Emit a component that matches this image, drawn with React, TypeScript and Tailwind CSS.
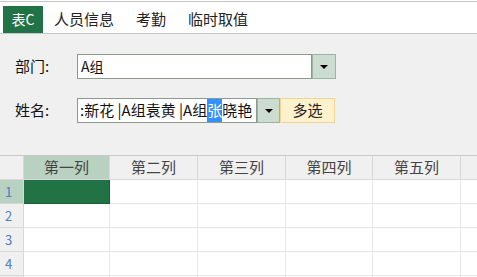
const font = "font-['Microsoft_YaHei','Noto_Sans_CJK_SC',sans-serif]";

const cols = ["第一列", "第二列", "第三列", "第四列", "第五列", ""];
const rows = [1, 2, 3, 4, 5];

function Tabs() {
  return (
    <div className="h-[33px] border-t border-b border-[#c6c6c6] mt-px bg-white flex items-end pl-[3px]">
      <div className="h-[27px] w-10 bg-[#217346] text-white flex items-center justify-center text-[14px]">
        表C
      </div>
      {["人员信息", "考勤", "临时取值"].map((t) => (
        <div key={t} className="h-[27px] px-[11px] flex items-center text-[15px] text-[#222]">
          {t}
        </div>
      ))}
    </div>
  );
}

function DropBtn({ w }: { w: string }) {
  return (
    <div className={`${w} h-full bg-[#cddcd1] border border-[#9fb3a5] flex items-center justify-center`}>
      <div className="w-0 h-0 border-l-[4px] border-r-[4px] border-t-[4px] border-l-transparent border-r-transparent border-t-black" />
    </div>
  );
}

function Form() {
  return (
    <div className="h-[122px] bg-[#f0f0f0] border-b border-[#c8c8c8] pt-5 pl-[15px] flex flex-col gap-[19px]">
      <div className="flex items-center h-[25px]">
        <div className="w-[62px] text-[15px] text-[#111]">部门:</div>
        <div className="flex h-full">
          <div className="w-[235px] h-full bg-white border border-[#8a9a8e] flex items-center pl-[3px] text-[14px] text-[#111]">
            A组
          </div>
          <DropBtn w="w-[24px]" />
        </div>
      </div>
      <div className="flex items-center h-[25px]">
        <div className="w-[62px] text-[15px] text-[#111]">姓名:</div>
        <div className="flex h-full">
          <div className="w-[180px] h-full bg-white border border-[#8a9a8e] flex items-center pl-[2px] text-[15px] text-[#111] overflow-hidden whitespace-nowrap">
            <span>:新花 |A组袁黄 |A组</span>
            <span className="bg-[#3390ff] text-white">张</span>
            <span>晓艳</span>
          </div>
          <DropBtn w="w-[23px]" />
          <div className="w-[55px] h-full bg-[#fff2cc] border border-[#f2d590] flex items-center justify-center text-[15px] text-[#222]">
            多选
          </div>
        </div>
      </div>
    </div>
  );
}

function Grid() {
  return (
    <div className="grid grid-cols-[24px_86px_88px_88px_87px_88px_87px] text-[15px]">
      <div className="h-6 bg-[#f0f0f0] border-r border-b border-[#d8d8d8]" />
      {cols.map((c, i) => (
        <div
          key={i}
          className={`h-6 border-r border-b border-[#d8d8d8] flex items-center justify-center text-[#444] ${
            i === 0 ? "bg-[#b8d1c1]" : "bg-[#f0f0f0]"
          }`}
        >
          {c}
        </div>
      ))}
      {rows.map((r) => (
        <>
          <div
            key={`h${r}`}
            className={`h-6 border-r border-b border-[#d8d8d8] flex items-center pl-[5px] text-[13px] text-[#4a7fc0] ${
              r === 1 ? "bg-[#b8d1c1]" : "bg-[#f0f0f0]"
            }`}
          >
            {r < 5 ? r : ""}
          </div>
          {cols.map((_, i) => (
            <div
              key={`${r}-${i}`}
              className={`h-6 border-r border-b ${
                r === 1 && i === 0 ? "bg-[#217346] border-[#1a5c38]" : "bg-white border-[#e6e6e6]"
              }`}
            />
          ))}
        </>
      ))}
    </div>
  );
}

export default function App() {
  return (
    <div className={`w-[477px] h-[277px] overflow-hidden bg-white ${font}`}>
      <Tabs />
      <Form />
      <Grid />
    </div>
  );
}
